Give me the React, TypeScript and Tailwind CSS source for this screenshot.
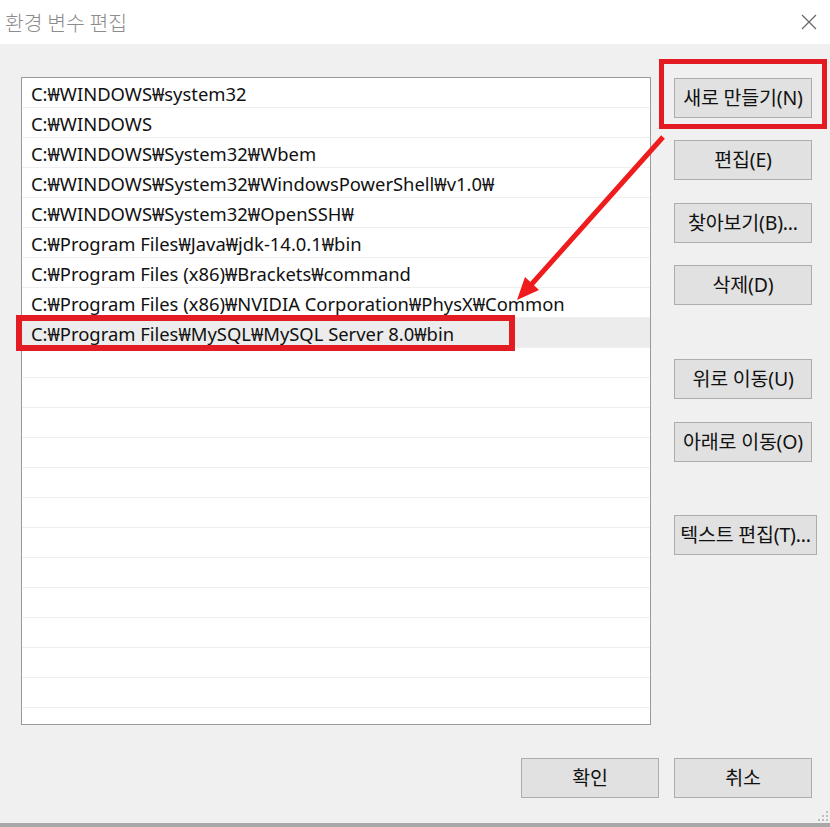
import React from "react";

const rows = [
  "C:₩WINDOWS₩system32",
  "C:₩WINDOWS",
  "C:₩WINDOWS₩System32₩Wbem",
  "C:₩WINDOWS₩System32₩WindowsPowerShell₩v1.0₩",
  "C:₩WINDOWS₩System32₩OpenSSH₩",
  "C:₩Program Files₩Java₩jdk-14.0.1₩bin",
  "C:₩Program Files (x86)₩Brackets₩command",
  "C:₩Program Files (x86)₩NVIDIA Corporation₩PhysX₩Common",
  "C:₩Program Files₩MySQL₩MySQL Server 8.0₩bin",
];

const emptyRows = Array.from({ length: 13 });

function Btn({ label, className = "" }: { label: string; className?: string }) {
  return (
    <div
      className={
        "h-[40px] w-[138px] bg-[#e1e1e1] border border-[#adadad] flex items-center justify-center text-[19.5px] text-[#111] whitespace-nowrap tracking-[-0.2px] " +
        className
      }
    >
      {label}
    </div>
  );
}

export default function App() {
  return (
    <div
      className="relative w-[830px] h-[827px] bg-[#f0f0f0] flex flex-col overflow-hidden"
      style={{ fontFamily: "'Noto Sans', 'Noto Sans CJK KR', sans-serif" }}
    >
      {/* Title bar */}
      <div className="h-[44px] bg-white flex items-center justify-between pl-[5px] pr-[13px] shrink-0">
        <span
          className="text-[20.5px] text-[#8c8c8c] font-light"
          style={{ fontFamily: "'Noto Sans CJK KR', sans-serif" }}
        >
          환경 변수 편집
        </span>
        <svg width="16" height="16" viewBox="0 0 16 16">
          <path d="M1 1 L15 15 M15 1 L1 15" stroke="#666" strokeWidth="1.2" />
        </svg>
      </div>

      {/* Body */}
      <div className="flex shrink-0">
        <div className="ml-[21px] mt-[33px] w-[630px] h-[648px] border border-[#9a9a9a] bg-white overflow-hidden">
          {rows.map((r, i) => (
            <div
              key={i}
              className={
                "h-[30px] border-b border-[#efefef] flex items-center pl-[9px] pt-[3px] text-[18.4px] text-[#111] whitespace-nowrap " +
                (i === 8 ? "bg-[#ececec]" : "")
              }
            >
              {r}
            </div>
          ))}
          {emptyRows.map((_, i) => (
            <div key={"e" + i} className="h-[30px] border-b border-[#efefef]" />
          ))}
        </div>

        <div className="ml-[23px] mt-[34px] flex flex-col">
          <Btn label="새로 만들기(N)" />
          <Btn label="편집(E)" className="mt-[22px]" />
          <Btn label="찾아보기(B)..." className="mt-[23px]" />
          <Btn label="삭제(D)" className="mt-[22px]" />
          <Btn label="위로 이동(U)" className="mt-[54px]" />
          <Btn label="아래로 이동(O)" className="mt-[23px]" />
          <Btn label="텍스트 편집(T)..." className="mt-[53px] w-[143px]" />
        </div>
      </div>

      {/* Bottom buttons */}
      <div className="flex justify-end gap-[15px] pr-[18px] mt-[33px] shrink-0">
        <Btn label="확인" />
        <Btn label="취소" />
      </div>

      <div className="flex-1" />
      <div className="h-[4px] bg-[#a8a8a8] shrink-0" />

      {/* resize grip */}
      <svg className="absolute right-[1px] bottom-[5px]" width="12" height="12" viewBox="0 0 12 12">
        <g fill="#bdbdbd">
          <rect x="9" y="1" width="2" height="2" />
          <rect x="5" y="5" width="2" height="2" />
          <rect x="9" y="5" width="2" height="2" />
          <rect x="1" y="9" width="2" height="2" />
          <rect x="5" y="9" width="2" height="2" />
          <rect x="9" y="9" width="2" height="2" />
        </g>
      </svg>

      {/* Annotations */}
      <div className="absolute left-[659px] top-[59px] w-[168px] h-[70px] border-[5px] border-[#e31b23]" />
      <div className="absolute left-[16px] top-[315px] w-[499px] h-[36px] border-[6px] border-[#e31b23]" />
      <svg className="absolute left-0 top-0" width="830" height="827" viewBox="0 0 830 827">
        <line x1="663" y1="137" x2="530" y2="286" stroke="#ee1c1c" strokeWidth="5" />
        <polygon points="517,300 539,290 525,277" fill="#ee1c1c" />
      </svg>
    </div>
  );
}
